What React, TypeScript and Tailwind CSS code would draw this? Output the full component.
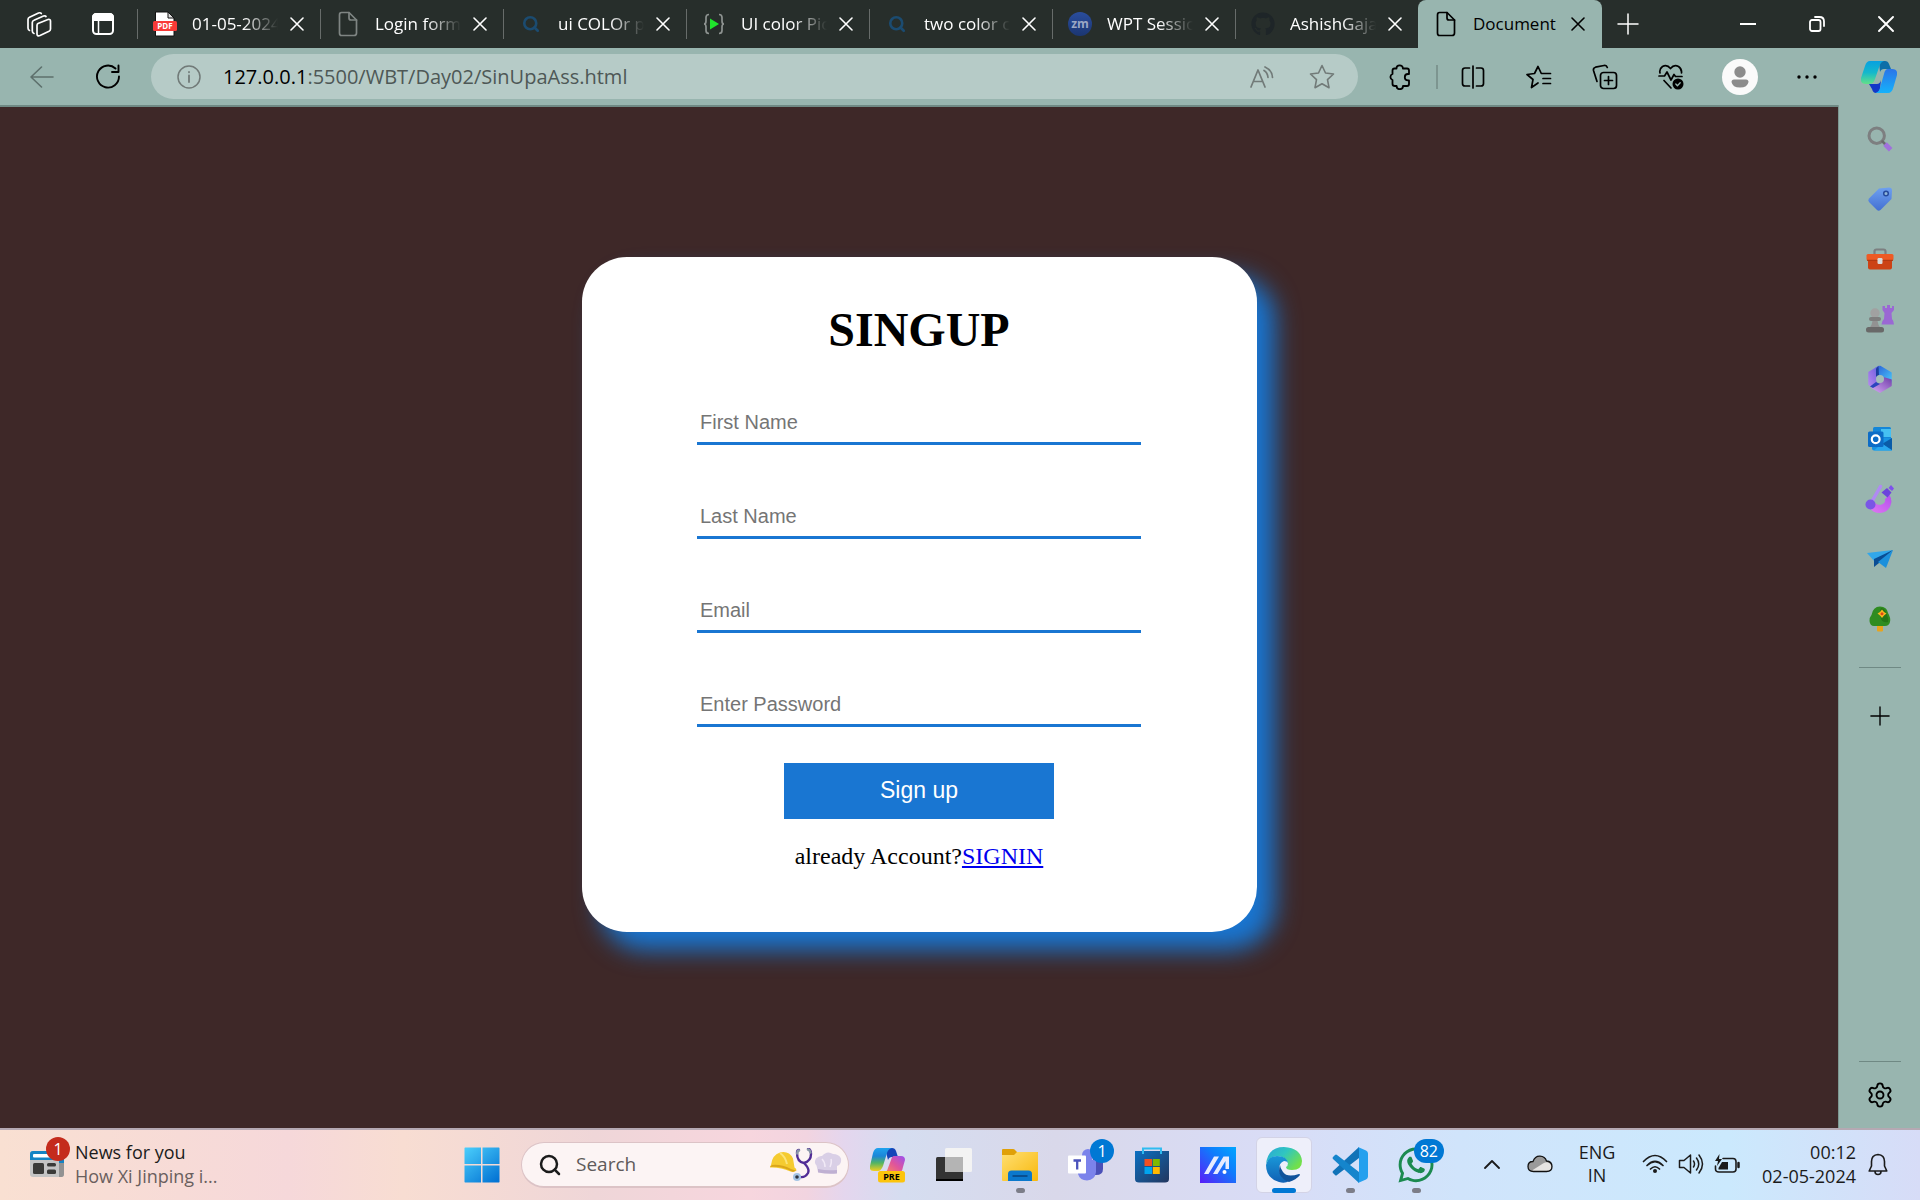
import React from "react";
import { Search, Settings } from "lucide-react";
import { FaGithub, FaWhatsapp } from "react-icons/fa";

type IconProps = { className?: string };

const line = {
  fill: "none",
  stroke: "currentColor",
  strokeWidth: 1.6,
  strokeLinecap: "round" as const,
  strokeLinejoin: "round" as const,
};

/* ---------- tab strip icons ---------- */

function WorkspacesIcon() {
  return (
    <svg width="26" height="26" viewBox="0 0 26 26" {...line} strokeWidth={1.7}>
      <path d="M12 12.500 22 8.500Q24.500 8 24.500 10V18Q24.500 19.500 23 20.300L14 24.500Q11 25.500 11 23V14.500Q11 13 12 12.500Z" />
      <path d="M8 22.500Q6.300 22 6.300 20V11.500Q6.300 10 8 9.300L17.500 5Q19.500 4.500 20 5.500" />
      <path d="M3.500 19.500Q2 19 2 17V8.500Q2 7 3.500 6.300L12.500 2Q14.500 1.300 15.300 2.500" />
    </svg>
  );
}

function TabMenuIcon() {
  return (
    <svg width="24" height="24" viewBox="0 0 24 24" {...line} strokeWidth={2}>
      <rect x="2" y="2" width="20" height="20" rx="3.500" />
      <path d="M2 5.500Q2 2 5.500 2h13Q22 2 22 5.500V8H2Z" fill="currentColor" />
      <path d="M7.500 8v14" strokeWidth={1.500} />
    </svg>
  );
}

function PdfIcon() {
  return (
    <svg width="24" height="26" viewBox="0 0 24 26">
      <path d="M2.500 1H15l6 6v18H2.500Z" fill="#fff" stroke="#111" strokeWidth="1" />
      <path d="M15 1v6h6Z" fill="#ddd" stroke="#111" strokeWidth="1" />
      <rect x="0" y="10" width="24" height="10" rx="1.500" fill="#f93a37" />
      <text x="12" y="18" fontSize="8" fontWeight="bold" fontFamily="Open Sans, sans-serif" textAnchor="middle" fill="#fff">
        PDF
      </text>
    </svg>
  );
}

function PageIcon({ className }: IconProps) {
  return (
    <svg width="20" height="26" viewBox="0 0 20 26" {...line} strokeWidth={1.700} className={className}>
      <path d="M3.500 1.500H11L18.500 9V22Q18.500 24.500 16 24.500H3.500Q1.500 24.500 1.500 22V4Q1.500 1.500 3.500 1.500Z" />
      <path d="M11 1.500V7Q11 9 13 9h5.500" />
    </svg>
  );
}

function BraceIcon() {
  return (
    <svg width="22" height="22" viewBox="0 0 22 22" fill="none" stroke="#8d9290" strokeWidth="1.700">
      <path d="M6 1.500Q3 1.500 3 4.500V8Q3 11 1 11 3 11 3 14v3.500Q3 20.500 6 20.500M16 1.500q3 0 3 3V8q0 3 2 3-2 0-2 3v3.500q0 3-3 3" />
      <path d="M7 5.500v11l9-5.500Z" fill="#1fe62c" stroke="none" />
    </svg>
  );
}

function ZoomIcon() {
  return (
    <span className="flex size-6 items-center justify-center rounded-full bg-linear-to-b from-[#2a4d9c] to-[#1b3672] text-xs font-bold text-[#9aa7c4]">
      zm
    </span>
  );
}

function CloseIcon() {
  return (
    <svg width="14" height="14" viewBox="0 0 14 14" {...line} strokeWidth={1.600}>
      <path d="M1 1l12 12M13 1 1 13" />
    </svg>
  );
}

function PlusIcon({ className }: IconProps) {
  return (
    <svg width="22" height="22" viewBox="0 0 22 22" {...line} strokeWidth={1.500} className={className}>
      <path d="M11 1v20M1 11h20" />
    </svg>
  );
}

/* ---------- toolbar icons ---------- */

function BackIcon() {
  return (
    <svg width="24" height="22" viewBox="0 0 24 22" {...line} strokeWidth={1.600}>
      <path d="M23 11H1M11.500 1 1 11l10.500 10" />
    </svg>
  );
}

function RefreshIcon() {
  return (
    <svg width="26" height="26" viewBox="0 0 26 26" {...line} strokeWidth={1.900}>
      <path d="M20.500 4.500A11 11 0 1 0 24 12.500" />
      <path d="M23.500 1.500V8H17" />
    </svg>
  );
}

function InfoIcon() {
  return (
    <svg width="24" height="24" viewBox="0 0 24 24" {...line} strokeWidth={1.500}>
      <circle cx="12" cy="12" r="11" />
      <path d="M12 10.500V17M12 7v.3" strokeWidth={1.800} />
    </svg>
  );
}

function ReadAloudIcon() {
  return (
    <svg width="24" height="22" viewBox="0 0 24 22" {...line} strokeWidth={1.700}>
      <path d="M1 21 8 4l7 17M3.500 15.500h9" />
      <path d="M14 4.500q3.500 2 4 7M15 1q7 3 7.500 10.500" />
    </svg>
  );
}

function StarIcon() {
  return (
    <svg width="26" height="25" viewBox="0 0 26 25" {...line} strokeWidth={1.600}>
      <path d="M13 1.500 16.500 9l8 1-6 5.700L20 23.700 13 19.800 6 23.700 7.500 15.700 1.500 10l8-1Z" />
    </svg>
  );
}

function PuzzleIcon() {
  return (
    <svg width="24" height="26" viewBox="0 0 24 26" {...line} strokeWidth={1.800}>
      <path d="M8.500 4.500a3.200 3.200 0 0 1 6.400 0H19Q21 4.500 21 6.500V10h-1a3.200 3.200 0 0 0 0 6.400h1V20q0 2-2 2h-4a3.200 3.200 0 0 1-6.400 0H7Q4.500 22 4.500 20v-4a3.200 3.200 0 0 1 0-6V6.500q0-2 2-2Z" />
    </svg>
  );
}

function SplitIcon() {
  return (
    <svg width="24" height="24" viewBox="0 0 24 24" {...line} strokeWidth={1.700}>
      <path d="M8.500 3H4Q1.500 3 1.500 5.500v13Q1.500 21 4 21h4.500M15.500 3H20q2.500 0 2.500 2.500v13Q22.500 21 20 21h-4.500M12 1v22" />
    </svg>
  );
}

function FavoritesIcon() {
  return (
    <svg width="26" height="24" viewBox="0 0 26 24" {...line} strokeWidth={1.700}>
      <path d="M12 18 5.500 22.500 7 14.500 1 9.500l7.500-1L12 1.500 15.300 8.500h9.200M17 13.500h7.500M17 18.500h7.500" />
    </svg>
  );
}

function CollectionsIcon() {
  return (
    <svg width="26" height="26" viewBox="0 0 26 26" {...line} strokeWidth={1.700}>
      <rect x="8.500" y="8.500" width="16" height="16" rx="3" />
      <path d="M16.500 12.500v8M12.500 16.500h8M5 17.500 1.500 6.500Q1 4 3.500 3.200L12 1.500q2.500-.5 3.300 2" />
    </svg>
  );
}

function HealthIcon() {
  return (
    <svg width="26" height="26" viewBox="0 0 26 26" {...line} strokeWidth={1.700}>
      <path d="M2 9Q1 5 4.500 2.500 9 0 12.500 4.500 16 0 20.500 2.500 24 5 23.500 9M1 12h5.500l2.500-4 4 8 3-5.500 1.500 2H24M6 16.500 13 24" />
      <circle cx="20" cy="20" r="5.500" fill="currentColor" stroke="none" />
      <path d="m17.800 20 1.600 1.700 2.800-3" stroke="#98b5af" strokeWidth={1.300} />
    </svg>
  );
}

function AvatarIcon() {
  return (
    <svg width="36" height="36" viewBox="0 0 36 36">
      <circle cx="18" cy="18" r="18" fill="#fafafa" />
      <circle cx="18" cy="13" r="5.700" fill="#8c8c8c" />
      <path d="M12 20.500h12q2.500 0 2.500 2.500-1 5.500-8.500 5.500T9.500 23q0-2.500 2.500-2.500Z" fill="#8c8c8c" />
    </svg>
  );
}

function DotsIcon() {
  return (
    <svg width="20" height="4" viewBox="0 0 20 4" fill="currentColor">
      <circle cx="2" cy="2" r="1.700" />
      <circle cx="10" cy="2" r="1.700" />
      <circle cx="18" cy="2" r="1.700" />
    </svg>
  );
}

function CopilotIcon() {
  return (
    <svg width="36" height="32" viewBox="0 0 36 32">
      <defs>
        <linearGradient id="cpa" x1="0" y1="0" x2="0" y2="1">
          <stop offset="0" stopColor="#08a0e0" />
          <stop offset=".5" stopColor="#14b8cc" />
          <stop offset="1" stopColor="#62e088" />
        </linearGradient>
        <linearGradient id="cpb" x1="0" y1="0" x2="0" y2="1">
          <stop offset="0" stopColor="#2b74e8" />
          <stop offset="1" stopColor="#15b2fb" />
        </linearGradient>
      </defs>
      <path d="M18 0h6q3 0 4 3l2 5h-7q-3 0-4 3Z" fill="#0d6ea8" />
      <path d="M8 23h8q3 0 4-4l-1 9q-1 4-4 4-3 0-4-4Z" fill="#1238c8" />
      <path d="M9 0h14q-3.500 1-4.500 5l-4.500 13q-1.500 5-5 5H5q-6 0-5-6L4 5Q5.500 0 9 0Z" fill="url(#cpa)" />
      <path d="M27 8h4q6 0 5 6l-3.500 12q-1.500 6-5.500 6H14.500q3.500-1 4.500-5l4-14q1-5 4-5Z" fill="url(#cpb)" />
    </svg>
  );
}

/* ---------- edge sidebar icons ---------- */

function SideSearchIcon() {
  return (
    <svg width="26" height="26" viewBox="0 0 26 26" fill="none" strokeLinecap="round">
      <circle cx="9.700" cy="9.700" r="7.700" stroke="#7d7f80" strokeWidth="3" />
      <path d="m15.500 15.500 2.500 2.500" stroke="#6a6c6d" strokeWidth="2.500" />
      <path d="m18 18 5.700 5.700" stroke="#a070dc" strokeWidth="5" strokeLinecap="butt" />
    </svg>
  );
}

function TagIcon() {
  return (
    <svg width="26" height="26" viewBox="0 0 26 26">
      <defs>
        <linearGradient id="tag" x1="0" y1="0" x2="0" y2="1">
          <stop offset="0" stopColor="#6ea0f0" />
          <stop offset="1" stopColor="#4370d2" />
        </linearGradient>
      </defs>
      <path d="M12 2.500 22 1.500q3 0 3 3L24.500 13 13.500 24q-2 1.500-3.500 0L2 16q-1.500-2 0-3.500Z" fill="url(#tag)" />
      <circle cx="19" cy="7.500" r="2.300" fill="#8fb5d8" stroke="#264a9c" strokeWidth="1.500" />
    </svg>
  );
}

function ToolboxIcon() {
  return (
    <svg width="28" height="22" viewBox="0 0 28 22">
      <path d="M8.500 7V3.500q0-2 2-2h7q2 0 2 2V7" fill="none" stroke="#7c7f80" strokeWidth="2.200" />
      <rect x="2" y="8" width="24" height="13.500" rx="2" fill="#cc4215" />
      <rect x=".5" y="6" width="27" height="6.500" rx="1.500" fill="#ee5a24" />
      <path d="M1 12.300h26" stroke="#a93410" />
      <rect x="11.500" y="10" width="5" height="6" rx="1.200" fill="#d8d8d8" />
    </svg>
  );
}

function GamesIcon() {
  return (
    <svg width="28" height="28" viewBox="0 0 28 28">
      <path d="M16.500 1h2.500v2h2V0h3v3h2V1h2v4l-2.500 3 .5 6q2 2 2 5.500H15.500q0-3.500 2.500-5.500l.5-6-2-3Z" fill="#9a68d4" />
      <circle cx="9" cy="8" r="4.700" fill="#a1a1a1" />
      <rect x="3" y="12" width="12" height="4" rx="2" fill="#7e7e7e" />
      <path d="M6.500 16h5q.5 4 3 7H3.500q2.500-3 3-7Z" fill="#929292" />
      <rect y="22" width="18" height="5.500" rx="2.500" fill="#696969" />
    </svg>
  );
}

function M365Icon() {
  return (
    <svg width="26" height="28" viewBox="0 0 26 28" strokeLinejoin="round">
      <defs>
        <linearGradient id="m1" x1="0" y1="1" x2="1" y2="0">
          <stop offset="0" stopColor="#b48aee" />
          <stop offset=".6" stopColor="#8a6ce4" />
          <stop offset="1" stopColor="#4a6ae0" />
        </linearGradient>
        <linearGradient id="m2" x1="0" y1="0" x2="1" y2="1">
          <stop offset="0" stopColor="#2a62d8" />
          <stop offset="1" stopColor="#49c5f8" />
        </linearGradient>
        <linearGradient id="m3" x1="0" y1="1" x2="1" y2="0">
          <stop offset="0" stopColor="#d2a4f2" />
          <stop offset="1" stopColor="#7442ac" />
        </linearGradient>
      </defs>
      <path d="M9 3.500 13 1.500 24 8v9l-7-4.500L13 9.500 9 12Z" fill="url(#m2)" stroke="url(#m2)" strokeWidth="1.500" />
      <path d="M12 1.500 2 7.500v12l4 3 4-2-1-3.500v-6l1-8Z" fill="url(#m1)" stroke="url(#m1)" strokeWidth="1.500" />
      <path d="M24 15v5.500L13 27 5 22.500l4-1 4-3 4-2.500v-3Z" fill="url(#m3)" stroke="url(#m3)" strokeWidth="1.500" />
      <path d="M3 21.500 9 17l4 2-7 4Z" fill="#2b45bd" />
      <path d="M9 3.500V12l3-2-.5-9Z" fill="#1d3f9e" />
      <circle cx="13" cy="14" r="4" fill="#a3bdb9" />
    </svg>
  );
}

function OutlookIcon() {
  return (
    <svg width="26" height="26" viewBox="0 0 26 26">
      <rect x="6" y="1" width="18" height="14" rx="1.500" fill="#1486d8" />
      <path d="M14 3h10v8H14Z" fill="#46c0f2" />
      <path d="M5 12h20v12.500H7q-2 0-2-2Z" fill="#1793e2" />
      <path d="m25 12-10 6 10 6Z" fill="#0a5ca8" />
      <path d="m25 24.500-10-7-8 7Z" fill="#29a7ee" />
      <rect x="1" y="5.500" width="15.500" height="15.500" rx="1.500" fill="#0d6cc6" />
      <circle cx="8.700" cy="13.200" r="3.900" fill="none" stroke="#fff" strokeWidth="2.200" />
    </svg>
  );
}

function DesignerIcon() {
  return (
    <svg width="30" height="30" viewBox="0 0 30 30">
      <defs>
        <linearGradient id="dz" x1="0" y1="1" x2="1" y2="0">
          <stop offset="0" stopColor="#e079f0" />
          <stop offset="1" stopColor="#b44ef0" />
        </linearGradient>
      </defs>
      <path d="M4 20Q5 29 15 29q10-1 11.500-11 0-4-2-7l-4.500 4q1 5-5 6-3 0-5-2Z" fill="url(#dz)" />
      <path d="M15.500 2.500 6 19" stroke="#b08af4" strokeWidth="3.500" strokeLinecap="round" />
      <circle cx="5.500" cy="20.500" r="5" fill="#7a56e6" />
      <path d="m22 4 4.500 4.500-4 5-6-5Z" fill="#6c43dc" />
      <path d="m26 1 3 3.500L27 7l-3.500-3Z" fill="#7e50ec" />
    </svg>
  );
}

function DropIcon() {
  return (
    <svg width="26" height="20" viewBox="0 0 26 20">
      <path d="M0 4 26 1 8 13Z" fill="#32a7ea" />
      <path d="M26 1 7 10v8l5-4Z" fill="#0a4d94" />
      <path d="M26 1 11 13l8 6Z" fill="#1c90dc" />
    </svg>
  );
}

function TreeIcon() {
  return (
    <svg width="22" height="26" viewBox="0 0 22 26">
      <rect x="8" y="18" width="6" height="7.500" rx="1" fill="#e8a41c" />
      <path d="M11 .5q7 0 8 6.500 3 5 2 9-1 4-5 4H5q-4 0-4.500-5 0-4 2-6Q4 .5 11 .5Z" fill="#2f8c20" />
      <path d="M12 2q5 1 6 7 2 4 1 7-5 1-7-3-2-6 0-11Z" fill="#247516" />
      <path d="M13 3.500 15 6l2.500 1.500L15 9.500 13 12l-2-2.500L8.500 7.500 11 6Z" fill="#fbb81e" />
      <circle cx="13" cy="7.700" r="1.500" fill="#d9471a" />
    </svg>
  );
}

/* ---------- taskbar icons ---------- */

function NewsIcon() {
  return (
    <svg width="34" height="27" viewBox="0 0 34 27">
      <rect width="34" height="26" rx="3" fill="#c4c4c4" />
      <path d="M29 12h5v11q0 3-2.500 3H29Z" fill="#929292" />
      <path d="M0 9V3q0-3 3-3h28q3 0 3 3v9h-5V9Z" fill="#1584c4" />
      <rect x="3" y="3" width="18" height="3.500" rx="1" fill="#fff" />
      <rect x="3" y="12" width="11" height="11" rx="1.500" fill="#3a3a38" />
      <rect x="17" y="12" width="9" height="3.500" rx="1.500" fill="#3a3a38" />
      <rect x="17" y="18.500" width="9" height="4.500" rx="1.500" fill="#3a3a38" />
    </svg>
  );
}

function WindowsIcon() {
  return (
    <svg width="36" height="36" viewBox="0 0 36 36">
      <defs>
        <linearGradient id="win" gradientUnits="userSpaceOnUse" x1="0" y1="0" x2="30" y2="36">
          <stop offset="0" stopColor="#4cd0fc" />
          <stop offset="1" stopColor="#0474d4" />
        </linearGradient>
      </defs>
      <path fill="url(#win)" d="M1 .5h16v16.500H.5V1ZM18.500.5H35l.5.5v16h-17ZM.5 18.500H17v17H1l-.5-.5ZM18.500 18.500h17V35l-.5.500H18.500Z" />
    </svg>
  );
}

function HighlightsIcon() {
  return (
    <svg width="72" height="34" viewBox="0 0 72 34">
      <path d="M1 17Q2 7 10 4.500q9-2 13 6l1.500 9q2 1 2 3-2 2-6 1Q10 19 0 19.500 0 18 1 17Z" fill="#f5cb30" />
      <path d="M2 17q9-1 19 4l5 1.500-3 1.500Q12 18 0 19Z" fill="#dba61a" />
      <path d="M10 5q5 3 7 11" fill="none" stroke="#fbe47a" strokeWidth="2" />
      <path d="M29 2q-2 0-2 3 0 9 7 10 7-2 7-9 0-5-3-5M34 15q6 6 4 10-3 5-8 4" fill="none" stroke="#512d96" strokeWidth="2.400" strokeLinecap="round" />
      <path d="M29 2.500q-1.500 0-1.800 3M38 1.500q2 .5 2.500 3" fill="none" stroke="#8a98a8" strokeWidth="2.400" strokeLinecap="round" />
      <circle cx="27" cy="29" r="4" fill="#a4c4e4" />
      <circle cx="27" cy="29" r="1.800" fill="#2d3440" />
      <path d="M48 24 46.500 17.500q-3-3-.5-7 3-3 6-2.500 5-6 11-2 6 0 8 4.500 1 6-4 7.500v7q-9 1-19-1Z" fill="#d9cfe6" />
      <path d="M48 21q9 2 19 1v3.500q-9 1-19-1Z" fill="#bfb0d2" />
      <path d="M52 11q3 3 3 8M61 11q1 3-1 8" fill="none" stroke="#f1e9f6" strokeWidth="1.500" />
    </svg>
  );
}

function CopilotPreIcon() {
  return (
    <svg width="36" height="36" viewBox="0 0 36 36">
      <defs>
        <linearGradient id="cl" x1="0" y1="0" x2="0" y2="1">
          <stop offset="0" stopColor="#1fa2ee" />
          <stop offset=".35" stopColor="#1c86d8" />
          <stop offset=".65" stopColor="#52b464" />
          <stop offset="1" stopColor="#f2cf1e" />
        </linearGradient>
        <linearGradient id="cr" x1="1" y1="0" x2="0" y2="1">
          <stop offset="0" stopColor="#9a50f0" />
          <stop offset=".5" stopColor="#e0559a" />
          <stop offset="1" stopColor="#fb8b5c" />
        </linearGradient>
      </defs>
      <path d="M15 1h7q3 0 4 3l2 6h-6q-3 0-4 3Z" fill="#1445b8" />
      <path d="M8 1h14q-4 1-5 5l-4 13q-2 5-5 5H4q-5 0-4-5L3 6q1.500-5 5-5Z" fill="url(#cl)" />
      <path d="M24 9h7q4 0 4 4l-2 7q-1 6-5 6H14q3-1 4-5l3-8q1-4 3-4Z" fill="url(#cr)" />
      <rect x="8" y="24" width="27" height="11.500" rx="2.500" fill="#fcc40c" />
      <text x="21.500" y="33" fontSize="9" fontWeight="bold" textAnchor="middle" fontFamily="Open Sans, sans-serif" fill="#000">
        PRE
      </text>
    </svg>
  );
}

function TaskViewIcon() {
  return (
    <svg width="36" height="34" viewBox="0 0 36 34">
      <rect y="9" width="27" height="24" rx="1.500" fill="#333" />
      <path d="M0 32h27" stroke="#000" strokeWidth="2" />
      <rect x="9" y="0" width="27" height="24" rx="1.500" fill="#f3f3f3" />
      <path d="M9 9h18v15H10.500Q9 24 9 22.500Z" fill="#b4b4b4" />
    </svg>
  );
}

function FolderIcon() {
  return (
    <svg width="36" height="34" viewBox="0 0 36 34">
      <defs>
        <linearGradient id="fo" x1="0" y1="0" x2="1" y2="1">
          <stop offset="0" stopColor="#ffdf72" />
          <stop offset="1" stopColor="#f8b80c" />
        </linearGradient>
      </defs>
      <path d="M0 2q0-1 1-1h10q1.500 0 2 1l2 2h20q1 0 1 1v8H0Z" fill="#e0a008" />
      <path d="M0 7h12l3-3h20q1 0 1 1v27q0 1-1 1H1q-1 0-1-1Z" fill="url(#fo)" />
      <path d="M6 33V26q0-3.500 3.500-3.500h17Q30 22.500 30 26v7Z" fill="#0b78cc" />
      <path d="M10.500 28h15" stroke="#084f90" strokeWidth="2" />
    </svg>
  );
}

function TeamsIcon() {
  return (
    <svg width="36" height="36" viewBox="0 0 36 36">
      <path d="M25 11h8q2 0 2 2v9q0 6-7 6h-4Z" fill="#4a50b8" />
      <circle cx="20" cy="8" r="6" fill="#7b83eb" />
      <path d="M10 13h18v12q-1 8-9 8.500-7 0-9-6.500Z" fill="#7b83eb" />
      <rect y="8.500" width="18" height="18" rx="1" fill="#fff" />
      <path d="M5.500 13.500h7.500M9.200 13.500V22.500" stroke="#4b53bc" strokeWidth="2.300" />
    </svg>
  );
}

function StoreIcon() {
  return (
    <svg width="36" height="36" viewBox="0 0 36 36">
      <defs>
        <linearGradient id="st" x1="0" y1="0" x2="1" y2="1">
          <stop offset="0" stopColor="#0b70c2" />
          <stop offset="1" stopColor="#23365e" />
        </linearGradient>
      </defs>
      <path d="M9 7V1.500h18V7" fill="none" stroke="#2fbbf0" strokeWidth="2" />
      <path d="M1 4h34v28q0 3.500-4 3.500H5q-4 0-4-3.500Z" fill="url(#st)" />
      <path d="M9 4v3M27 4v3" stroke="#2fbbf0" strokeWidth="2" />
      <path d="M10.500 12h7.500v7h-7.500Z" fill="#f25022" />
      <path d="M18.800 12h7v7h-7Z" fill="#7fba00" />
      <path d="M10.500 20h7.500v7h-7.500Z" fill="#00a4ef" />
      <path d="M18.800 20h7v7h-7Z" fill="#ffb900" />
    </svg>
  );
}

function MyAsusIcon() {
  return (
    <svg width="36" height="36" viewBox="0 0 36 36">
      <defs>
        <linearGradient id="as" x1="0" y1="1" x2="1" y2="0">
          <stop offset="0" stopColor="#5a1cf8" />
          <stop offset=".6" stopColor="#0f7cfc" />
          <stop offset="1" stopColor="#00a6ff" />
        </linearGradient>
      </defs>
      <path d="M0 0h36v36H0Z" fill="url(#as)" />
      <path d="M4 27 14 9.500h5L8.500 27ZM13 27 23.500 9.500H29V22h-3.500v-8L17.500 27Z" fill="#e6ebff" />
      <circle cx="24.500" cy="25" r="2" fill="#fff" />
    </svg>
  );
}

function EdgeIcon() {
  return (
    <svg width="36" height="36" viewBox="0 0 36 36">
      <defs>
        <linearGradient id="eg" x1="0" y1="0" x2="1" y2=".6">
          <stop offset="0" stopColor="#2aa5d8" />
          <stop offset=".5" stopColor="#30c6c0" />
          <stop offset="1" stopColor="#72e04a" />
        </linearGradient>
        <linearGradient id="eb" x1="0" y1="0" x2="0" y2="1">
          <stop offset="0" stopColor="#1a98d8" />
          <stop offset="1" stopColor="#1060b4" />
        </linearGradient>
      </defs>
      <path d="M0 17Q2 0 18 0q17 1 18 14 0 9-10 9-6 0-6-3 2-1 2-4Q20 9 10 9 3 10 0 17Z" fill="url(#eg)" />
      <path d="M0 18Q2 9 11 9q10 0 11 7-1-2-4-2-5 2-5 8 1 9 10 12-4 3-10 1Q0 31 0 18Z" fill="url(#eb)" />
      <path d="M14 18q-4 12 9 17 7-2 11-7 0-1-1-1-12 4-16-2-3-4-3-7Z" fill="#10539c" />
    </svg>
  );
}

function VsCodeIcon() {
  return (
    <svg width="36" height="36" viewBox="0 0 36 36">
      <path d="M27 0 1 24q-1 1 0 2l2 2q1 1 2 0L27 11Z" fill="#1173b8" />
      <path d="M27 36 1 12q-1-1 0-2l2-2q1-1 2 0l22 17Z" fill="#1585cc" />
      <path d="M26 0 34 3.500q2 1 2 3v23q0 2-2 3L26 36q1-1 1-3V3q0-2-1-3Z" fill="#24a0ee" />
    </svg>
  );
}

function ChevronUpIcon() {
  return (
    <svg width="16" height="9" viewBox="0 0 16 9" {...line} strokeWidth={1.800}>
      <path d="m1 8 7-7 7 7" />
    </svg>
  );
}

function CloudIcon() {
  return (
    <svg width="26" height="18" viewBox="0 0 26 18">
      <path d="M6.500 16.500Q1 16.500 1 11.500T6 6.500Q8 1 13 1.200 18 1.500 19.500 6 25 6.500 25 11.500T19.500 16.500Z" fill="#9a9a9a" />
      <path d="m5 15.500 11-7q4-2 6-.5 3 2 2.500 5-1 3.500-5 3.500H7Z" fill="#e6e4e2" />
      <path d="M6.500 16.500Q1 16.500 1 11.500T6 6.500Q8 1 13 1.200 18 1.500 19.500 6 25 6.500 25 11.500T19.500 16.500Z" fill="none" stroke="#111" strokeWidth="1.300" />
    </svg>
  );
}

function WifiIcon() {
  return (
    <svg width="26" height="20" viewBox="0 0 26 20" {...line} strokeWidth={1.700}>
      <path d="M1.500 7.500q11.500-12 23 0M5 11.500q8-8 16 0M8.500 15q4.500-4.500 9 0" />
      <circle cx="13" cy="17" r="2" fill="currentColor" stroke="none" />
    </svg>
  );
}

function SpeakerIcon() {
  return (
    <svg width="26" height="22" viewBox="0 0 26 22" {...line} strokeWidth={1.500}>
      <path d="M1.500 7.500h4.500L12.500 2v18L6 14.500H1.500ZM15.500 8q2 3 0 6M18.500 5q4.500 6 0 12M21 2q7 9 0 18" />
    </svg>
  );
}

function BatteryIcon() {
  return (
    <svg width="26" height="20" viewBox="0 0 26 20" {...line} strokeWidth={1.600}>
      <path d="M9 4.500h10Q22 4.500 22 7.500V15q0 3-3 3H5q-3.500 0-3.500-3v-3" />
      <path d="M8 8h6v7.500H4.500V14Z" fill="currentColor" stroke="none" />
      <path d="M5.500 0 1 7h3l-1 5 5-7H5Z" fill="currentColor" stroke="none" />
      <path d="M24.500 9v4" strokeWidth={2.500} />
    </svg>
  );
}

function BellIcon() {
  return (
    <svg width="20" height="23" viewBox="0 0 20 23" {...line} strokeWidth={1.600}>
      <path d="M10 1.500q-6.500.5-6.500 7V13l-2.300 5h17.600l-2.300-5V8.500q0-6.500-6.500-7ZM7 18.500q0 3 3 3t3-3" />
    </svg>
  );
}

/* ---------- data ---------- */

const tabs: { title: string; icon: React.ReactNode; active?: boolean }[] = [
  { title: "01-05-2024", icon: <PdfIcon /> },
  { title: "Login form", icon: <PageIcon className="text-[#7f8583]" /> },
  { title: "ui COLOr p", icon: <Search size={18} strokeWidth={3.500} className="text-[#1b4b70]" /> },
  { title: "UI color Pic", icon: <BraceIcon /> },
  { title: "two color c", icon: <Search size={18} strokeWidth={3.500} className="text-[#1b4b70]" /> },
  { title: "WPT Sessio", icon: <ZoomIcon /> },
  { title: "AshishGaja", icon: <FaGithub size={24} className="text-[#1e2528]" /> },
  { title: "Document", icon: <PageIcon className="text-black" />, active: true },
];

const toolbarActions = [
  { label: "Split screen", icon: <SplitIcon />, width: "w-[66px]" },
  { label: "Favorites", icon: <FavoritesIcon />, width: "w-[66px]" },
  { label: "Collections", icon: <CollectionsIcon />, width: "w-[66px]" },
  { label: "Browser essentials", icon: <HealthIcon />, width: "w-[66px]" },
  { label: "Profile", icon: <AvatarIcon />, width: "w-[72px]" },
  { label: "Settings and more", icon: <DotsIcon />, width: "w-[62px]" },
];

const sidebarApps = [
  { label: "Search", icon: <SideSearchIcon /> },
  { label: "Shopping", icon: <TagIcon /> },
  { label: "Tools", icon: <ToolboxIcon /> },
  { label: "Games", icon: <GamesIcon /> },
  { label: "Microsoft 365", icon: <M365Icon /> },
  { label: "Outlook", icon: <OutlookIcon /> },
  { label: "Image Creator", icon: <DesignerIcon /> },
  { label: "Drop", icon: <DropIcon /> },
  { label: "Tree", icon: <TreeIcon /> },
];

const taskbarApps: { label: string; icon: React.ReactNode; badge?: string; state?: "open" | "active" }[] = [
  { label: "Copilot", icon: <CopilotPreIcon /> },
  { label: "Task view", icon: <TaskViewIcon /> },
  { label: "File Explorer", icon: <FolderIcon />, state: "open" },
  { label: "Teams", icon: <TeamsIcon />, badge: "1" },
  { label: "Microsoft Store", icon: <StoreIcon /> },
  { label: "MyASUS", icon: <MyAsusIcon /> },
  { label: "Edge", icon: <EdgeIcon />, state: "active" },
  { label: "Visual Studio Code", icon: <VsCodeIcon />, state: "open" },
  { label: "WhatsApp", icon: <FaWhatsapp size={40} className="text-[#1b8a50]" />, badge: "82", state: "open" },
];

const fields = [
  { id: "first", label: "First Name", type: "text" },
  { id: "last", label: "Last Name", type: "text" },
  { id: "email", label: "Email", type: "email" },
  { id: "password", label: "Enter Password", type: "password" },
];

/* ---------- sections ---------- */

function TabStrip() {
  return (
    <header className="flex h-12 bg-[#272e2b] text-white">
      <div className="flex w-[137px] shrink-0 items-center pl-[7px]">
        <button aria-label="Workspaces" className="flex w-16 justify-center">
          <WorkspacesIcon />
        </button>
        <button aria-label="Tab actions" className="flex w-16 justify-center">
          <TabMenuIcon />
        </button>
      </div>
      {tabs.map((tab) => (
        <div
          key={tab.title}
          className={
            tab.active
              ? "flex w-[184px] items-center rounded-t-lg bg-[#98b5af] pl-3 text-black"
              : "flex w-[183px] items-center bg-linear-to-r from-[#676c6a] from-[1px] to-transparent to-[1px] bg-[length:100%_30px] bg-center bg-no-repeat pl-3"
          }
        >
          <span className="flex w-8 shrink-0 justify-center">{tab.icon}</span>
          <span
            className={
              tab.active
                ? "ml-[11px] w-[86px] overflow-hidden text-[17px] whitespace-nowrap"
                : "ml-[11px] w-[86px] overflow-hidden text-[17px] whitespace-nowrap [mask-image:linear-gradient(to_right,black_60%,transparent)]"
            }
          >
            {tab.title}
          </span>
          <button aria-label={`Close ${tab.title}`} className="ml-3">
            <CloseIcon />
          </button>
        </div>
      ))}
      <button aria-label="New tab" className="flex w-[52px] items-center justify-center">
        <PlusIcon />
      </button>
      <div className="ml-auto flex">
        <button aria-label="Minimize" className="flex w-[69px] items-center justify-center">
          <span className="h-0.5 w-4 bg-white" />
        </button>
        <button aria-label="Restore" className="flex w-[69px] items-center justify-center">
          <svg width="16" height="16" viewBox="0 0 16 16" {...line} strokeWidth={1.800}>
            <rect x="1" y="4" width="10.500" height="11" rx="2" />
            <path d="M6 1h4.500Q15 1 15 5.500V10" />
          </svg>
        </button>
        <button aria-label="Close window" className="flex w-[69px] items-center justify-center">
          <svg width="16" height="16" viewBox="0 0 16 16" {...line} strokeWidth={1.900}>
            <path d="m1 1 14 14M15 1 1 15" />
          </svg>
        </button>
      </div>
    </header>
  );
}

function Toolbar() {
  return (
    <div className="flex h-[59px] items-center border-b-2 border-[#6f8984] pl-[9px] text-black">
      <button aria-label="Back" className="flex w-[66px] justify-center text-[#5d706c]">
        <BackIcon />
      </button>
      <button aria-label="Refresh" className="flex w-[66px] justify-center">
        <RefreshIcon />
      </button>
      <div className="mr-2.5 ml-2.5 flex h-[45px] flex-1 items-center rounded-full bg-[#b6cbc7] pl-[26px] text-[#717a78]">
        <InfoIcon />
        <div className="ml-[22px] flex-1 text-[20px] text-[#4e5856]">
          <span className="text-black">127.0.0.1</span>:5500/WBT/Day02/SinUpaAss.html
        </div>
        <button aria-label="Read aloud" className="flex w-[60px] justify-center">
          <ReadAloudIcon />
        </button>
        <button aria-label="Add to favorites" className="mr-1.5 flex w-[60px] justify-center">
          <StarIcon />
        </button>
      </div>
      <button aria-label="Extensions" className="flex w-16 justify-center">
        <PuzzleIcon />
      </button>
      <span className="mr-0.5 ml-1 h-6 w-0.5 bg-[#7d9590]" />
      {toolbarActions.map((action) => (
        <button key={action.label} aria-label={action.label} className={`${action.width} flex justify-center`}>
          {action.icon}
        </button>
      ))}
    </div>
  );
}

function SignupCard() {
  return (
    <form
      onSubmit={(event) => event.preventDefault()}
      className="flex w-[675px] flex-col items-center rounded-[45px] bg-white px-28 pt-[45px] pb-[60px] font-['Liberation_Serif',serif] text-2xl text-black shadow-[18px_18px_24px_#1976d2]"
    >
      <h1 className="mb-10 text-5xl leading-[56px] font-bold">SINGUP</h1>
      {fields.map((field) => (
        <input
          key={field.id}
          id={field.id}
          type={field.type}
          aria-label={field.label}
          placeholder={field.label}
          className="mb-[47px] h-[47px] w-full max-w-[444px] border-b-[3px] border-[#1976d2] px-[3px] pt-1 font-['Liberation_Sans',sans-serif] text-xl outline-none placeholder:text-[#757575] last-of-type:mb-9"
        />
      ))}
      <button
        type="submit"
        className="mb-[21px] h-14 w-[270px] bg-[#1976d2] pb-0.5 font-['Liberation_Sans',sans-serif] text-[23px] text-white"
      >
        Sign up
      </button>
      <p>
        already Account?
        <a href="#signin" className="text-[#0000ee] underline">
          SIGNIN
        </a>
      </p>
    </form>
  );
}

function Sidebar() {
  return (
    <aside className="flex w-[82px] shrink-0 flex-col items-center text-black">
      <button aria-label="Copilot" className="flex h-[57px] items-center">
        <CopilotIcon />
      </button>
      <div className="flex w-full flex-1 flex-col items-center border-l border-[#7d9791] pt-1">
        {sidebarApps.map((app) => (
          <button key={app.label} aria-label={app.label} className="flex h-[60px] items-center">
            {app.icon}
          </button>
        ))}
        <hr className="mt-[18px] w-[42px] border-[#6f8984]" />
        <button aria-label="Customize" className="mt-[38px]">
          <PlusIcon className="size-5" />
        </button>
        <hr className="mt-auto w-[42px] border-[#6f8984]" />
        <button aria-label="Settings" className="flex h-[66px] items-center">
          <Settings size={28} strokeWidth={1.600} />
        </button>
      </div>
    </aside>
  );
}

function Taskbar() {
  return (
    <footer className="grid h-[72px] grid-cols-[450fr_auto_472fr] items-stretch border-t-2 border-[#b5a9b3] bg-[linear-gradient(90deg,#f9e0d2_0%,#f6d8da_15%,#f8ddd2_21%,#efd6d8_31%,#f7d6de_39%,#f2d4e0_42%,#e4d6ee_44%,#d5ddf0_47%,#d9d8ea_55%,#d9dcf6_66%,#d0e4fb_76%,#cbe9fd_90%,#d7dcf7_100%)] text-[#1b1b1b]">
      <button className="flex items-center pb-0.5 pl-[30px] text-left">
        <span className="relative">
          <NewsIcon />
          <span className="absolute -top-3.5 left-4 flex size-6 items-center justify-center rounded-full bg-[#c42b1c] text-base text-white">
            1
          </span>
        </span>
        <span className="ml-[11px] text-[18px] leading-6">
          <span className="block">News for you</span>
          <span className="block text-[#6a5f5e]">How Xi Jinping i...</span>
        </span>
      </button>

      <div className="flex items-center">
        <button aria-label="Start" className="flex w-[66px] justify-center">
          <WindowsIcon />
        </button>
        <label className="mx-1.5 flex h-[46px] w-[328px] items-center rounded-full border border-b-2 border-[#dcc3c6] bg-[#fcf4f4] pr-1.5 pl-4">
          <Search size={24} strokeWidth={2.500} />
          <input
            type="text"
            aria-label="Search"
            placeholder="Search"
            className="ml-3.5 w-0 flex-1 text-[19px] outline-none placeholder:text-[#5f5a5a]"
          />
          <HighlightsIcon />
        </label>
        {taskbarApps.map((app) => (
          <button key={app.label} aria-label={app.label} className="flex w-[66px] justify-center">
            <span
              className={
                app.state === "active"
                  ? "relative flex size-14 items-center justify-center rounded-md border border-[#d3d3e6] bg-[#eeeffa]"
                  : "relative flex size-14 items-center justify-center"
              }
            >
              {app.icon}
              {app.badge && (
                <span className="absolute top-0.5 right-0 flex h-6 min-w-6 items-center justify-center rounded-full bg-[#0078d4] px-1.5 text-base text-white">
                  {app.badge}
                </span>
              )}
              {app.state === "open" && <span className="absolute bottom-0 h-[5px] w-[9px] rounded-full bg-[#7c7d88]" />}
              {app.state === "active" && <span className="absolute -bottom-px h-[5px] w-6 rounded-full bg-[#0078d4]" />}
            </span>
          </button>
        ))}
      </div>

      <div className="flex items-center justify-end pr-8 pb-0.5">
        <button aria-label="Show hidden icons" className="flex w-12 justify-center">
          <ChevronUpIcon />
        </button>
        <button aria-label="OneDrive" className="flex w-12 justify-center">
          <CloudIcon />
        </button>
        <button className="w-[66px] text-center text-[18px] leading-[23px]">
          <span className="block">ENG</span>
          <span className="block">IN</span>
        </button>
        <button aria-label="Network, volume and battery" className="ml-1 flex items-center gap-2.5 px-2">
          <WifiIcon />
          <SpeakerIcon />
          <BatteryIcon />
        </button>
        <button className="ml-3.5 text-right text-[18px] leading-6">
          <span className="block">00:12</span>
          <span className="block">02-05-2024</span>
        </button>
        <button aria-label="Notifications" className="ml-3">
          <BellIcon />
        </button>
      </div>
    </footer>
  );
}

export default function App() {
  return (
    <div className="flex min-h-screen flex-col bg-[#98b5af] font-['Open_Sans',sans-serif]">
      <TabStrip />
      <div className="flex flex-1">
        <div className="flex flex-1 flex-col">
          <Toolbar />
          <main className="flex flex-1 items-start justify-center bg-[#3e2828] pt-[150px] pb-20">
            <SignupCard />
          </main>
        </div>
        <Sidebar />
      </div>
      <Taskbar />
    </div>
  );
}
